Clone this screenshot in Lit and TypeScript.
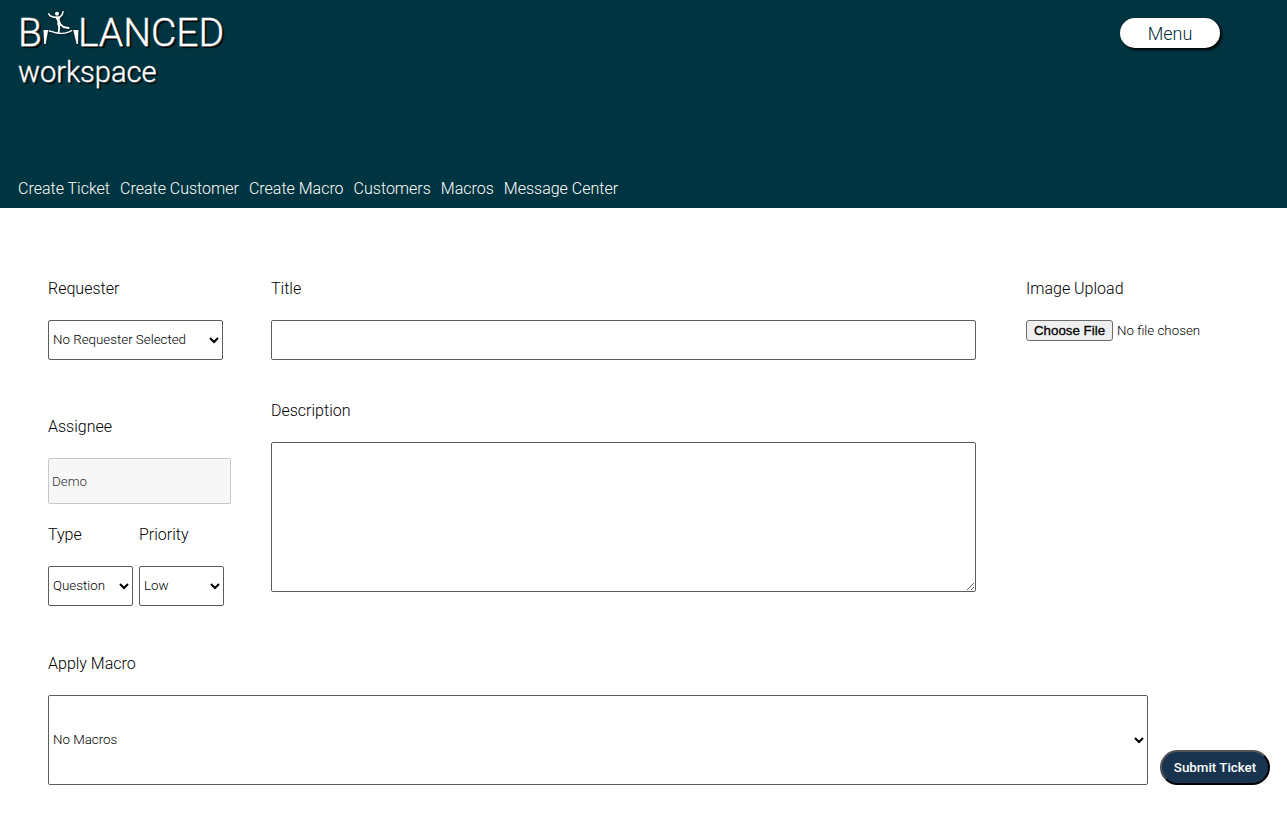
import { LitElement, html, css } from "lit";
import { customElement } from "lit/decorators.js";

const links = ["Create Ticket", "Create Customer", "Create Macro", "Customers", "Macros", "Message Center"];

@customElement("app-header")
class AppHeader extends LitElement {
  static styles = css`
    :host { display: block; }
    .header {
      display: flex; flex-direction: column; justify-content: space-between;
      min-height: 208px; box-sizing: border-box; padding: 8px 18px 7px;
      background: #003440; color: #fff;
    }
    .top { display: flex; justify-content: space-between; align-items: flex-start; }
    .brand { text-shadow: 1px 1px 0 #fff3, 2px 2px 1px #000; color: #fff; -webkit-text-stroke: 0.3px #fff; }
    .name { display: flex; font-size: 39px; line-height: 50px; }
    .sub { font-size: 29px; line-height: 28px; }
    .logo { width: 36px; height: 40px; filter: drop-shadow(1px 1px 1px #0008); }
    .menu {
      width: 100px; height: 30px; margin: 10px 49px 0 0; padding: 0; border: 0; border-radius: 15px;
      background: #fff; color: #002a34; font: 300 18px Roboto, sans-serif;
      box-shadow: 2px 2px 3px #000;
    }
    .nav { display: flex; flex-wrap: wrap; gap: 10px; }
    .link { color: #fff; text-decoration: none; font-size: 16px; line-height: 24px; }
  `;
  render() {
    return html`<header class="header">
      <div class="top">
        <div class="brand">
          <div class="name"><span>B</span><svg class="logo" viewBox="-1 0 36 40" overflow="visible" role="img" aria-label="A">
            <g fill="none" stroke="#fff" stroke-linecap="round" stroke-linejoin="round">
              <path d="M6.2 23L9 23.6Q18 27.2 26 23.8L28.6 22.6" stroke-width="1.3"/>
              <path d="M5.8 5.8L7 7.8L11 9.3L17 8.9L19.2 6.7L20 3.8" stroke-width="1.5"/>
              <path d="M15.6 15.8L16.2 20L15.6 24.4M16.4 15.5L20.5 19L25.6 20" stroke-width="1.9"/>
            </g>
            <path d="M11.5 8.8L17.4 8.5L16.6 11.5L18.2 16.5L14.6 17.5L14.2 12.5Z" fill="#fff"/>
            <circle cx="14" cy="5.8" r="2" fill="#fff"/>
            <path d="M0.5 22H5.2L2.7 36H1.2ZM30.2 22H35.4L35 36H33.6Z" fill="#fff"/>
          </svg><span>LANCED</span></div>
          <div class="sub">workspace</div>
        </div>
        <button class="menu" type="button">Menu</button>
      </div>
      <nav class="nav">${links.map((l) => html`<a class="link" href="#">${l}</a>`)}</nav>
    </header>`;
  }
}

@customElement("ticket-form")
class TicketForm extends LitElement {
  static styles = css`
    :host { display: block; }
    .form { padding: 71px 17px 54px 48px; font-size: 16px; line-height: 20px; color: #000; }
    .columns { display: grid; grid-template-columns: 183px minmax(0, 1fr) 223px; gap: 40px; padding-right: 31px; }
    .column { display: flex; flex-direction: column; }
    .people { gap: 21px; }
    .requester { padding-bottom: 36px; }
    .details { gap: 41px; }
    .upload { padding-left: 10px; }
    .field { display: flex; flex-direction: column; gap: 21px; align-items: flex-start; }
    .pair { display: flex; gap: 6px; }
    .control {
      box-sizing: border-box; width: 100%; height: 40px; margin: 0; color: #000;
      font-family: Roboto, sans-serif; font-weight: 300;
      border: 1px solid #5c5c5c; border-radius: 2px; background: #fff;
    }
    select.control { padding-bottom: 2px; }
    .wide { width: 175px; }
    .small { width: 85px; }
    .assignee { height: 46px; padding: 1px 3px; }
    .assignee:disabled { border-color: #c8c8c8; background: #f7f7f7; color: #303030; }
    .text { height: 150px; resize: both; display: block; }
    .file { width: 100%; font-family: Roboto, sans-serif; font-weight: 300; }
    .file::file-selector-button {
      box-sizing: border-box; width: 87px; height: 21px; padding: 0; margin-right: 4px;
      font-family: "Liberation Sans", sans-serif; font-weight: 400; -webkit-text-stroke: 0.3px #000;
      border: 1px solid #6b6b6b; border-radius: 3px; background: #efefef; color: #000;
    }
    .bottom { display: flex; align-items: flex-end; gap: 12px; padding-top: 48px; }
    .macro { flex: 1; }
    .tall { height: 90px; }
    .submit {
      width: 110px; height: 35px; padding: 0; border: 2px outset #000; border-radius: 18px;
      background: #18344f; color: #fff; font-family: Roboto, sans-serif; font-weight: 500;
    }
  `;
  render() {
    return html`<form class="form" @submit=${(e: Event) => e.preventDefault()}>
      <div class="columns">
        <div class="column people">
          <div class="field requester">
            <label for="requester">Requester</label>
            <select class="control wide" id="requester"><option>No Requester Selected</option></select>
          </div>
          <div class="field">
            <label for="assignee">Assignee</label>
            <input class="control assignee" id="assignee" value="Demo" disabled />
          </div>
          <div class="pair">
            <div class="field">
              <label for="type">Type</label>
              <select class="control small" id="type"><option>Question</option><option>Problem</option></select>
            </div>
            <div class="field">
              <label for="priority">Priority</label>
              <select class="control small" id="priority"><option>Low</option><option>High</option></select>
            </div>
          </div>
        </div>
        <div class="column details">
          <div class="field">
            <label for="title">Title</label>
            <input class="control" id="title" type="text" />
          </div>
          <div class="field">
            <label for="description">Description</label>
            <textarea class="control text" id="description"></textarea>
          </div>
        </div>
        <div class="column upload">
          <div class="field">
            <label for="image">Image Upload</label>
            <input class="file" id="image" type="file" />
          </div>
        </div>
      </div>
      <div class="bottom">
        <div class="field macro">
          <label for="macro">Apply Macro</label>
          <select class="control tall" id="macro"><option>No Macros</option></select>
        </div>
        <button class="submit" type="submit">Submit Ticket</button>
      </div>
    </form>`;
  }
}

@customElement("app-root")
class AppRoot extends LitElement {
  static styles = css`
    :host { display: block; min-height: 100vh; background: #fff; font-family: Roboto, sans-serif; font-weight: 300; }
  `;
  render() {
    return html`<app-header></app-header><main><ticket-form></ticket-form></main>`;
  }
}
